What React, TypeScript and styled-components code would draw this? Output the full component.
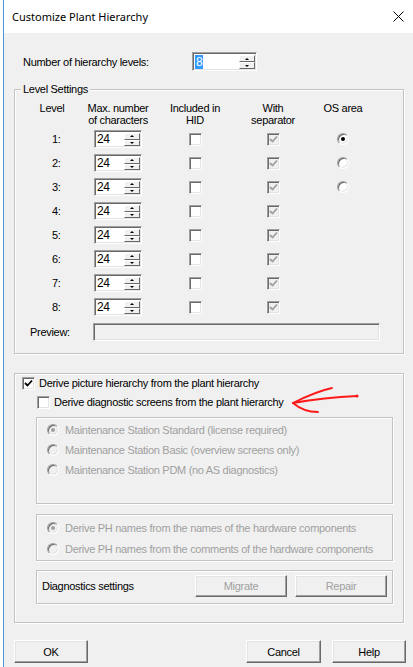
import { FC, ReactNode } from 'react';
import styled, { createGlobalStyle } from 'styled-components';

const GlobalStyle = createGlobalStyle`
  html, body {
    margin: 0;
    padding: 0;
    background: #fff;
  }
  body {
    font-family: 'Liberation Sans', Arial, sans-serif;
    font-size: 11px;
  }
`;

const Page = styled.div`
  width: 413px;
  height: 667px;
  display: flex;
  background: #fff;
  overflow: hidden;
`;

const Window = styled.div`
  flex: 1;
  margin-left: 3px;
  display: flex;
  flex-direction: column;
  border-left: 1px solid #4a94de;
  background: #f0f0f0;
`;

const TitleBar = styled.div`
  height: 33px;
  flex-shrink: 0;
  display: flex;
  align-items: center;
  justify-content: space-between;
  padding: 0 9px 0 8px;
  background: #fff;
  font-family: 'Noto Sans', 'Open Sans', sans-serif;
  font-size: 11px;
  color: #000;
`;

const Body = styled.div`
  display: flex;
  flex-direction: column;
  padding: 0 9px 0 10px;
  font-family: 'Liberation Sans', Arial, sans-serif;
  font-size: 11px;
  letter-spacing: -0.3px;
  color: #000;
`;

const LevelsRow = styled.div`
  margin-top: 19px;
  height: 19px;
  display: flex;
  align-items: center;
`;

const LevelsLabel = styled.span`
  margin-left: 9px;
  width: 169px;
`;

const Group = styled.div<{ $top: number; $pad: string }>`
  position: relative;
  margin-top: ${({ $top }) => $top}px;
  padding: ${({ $pad }) => $pad};
  border: 1px solid #c3c3c3;
  box-shadow: inset 1px 1px 0 #fff, 1px 1px 0 #fff;
`;

const Legend = styled.span`
  position: absolute;
  top: -7px;
  left: 6px;
  padding: 0 2px;
  line-height: 13px;
  background: #f0f0f0;
`;

const LevelGrid = styled.div`
  display: grid;
  grid-template-columns: 74px 58px 96px 60px 80px;
  grid-template-rows: 25px;
  grid-auto-rows: 24px;
`;

const Head = styled.div`
  display: flex;
  flex-direction: column;
  align-items: center;
  line-height: 12px;
  white-space: nowrap;
`;

const Cell = styled.div<{ $start?: boolean }>`
  display: flex;
  align-items: center;
  justify-content: ${({ $start }) => ($start ? 'flex-start' : 'center')};
  padding-left: ${({ $start }) => ($start ? '37px' : '0')};
`;

const PreviewRow = styled.div`
  margin-top: 3px;
  height: 19px;
  display: flex;
  align-items: center;
  padding-left: 15px;
`;

const PreviewLabel = styled.span`
  width: 63px;
`;

const Sunken = styled.div<{ $w: number; $h: number; $bg?: string }>`
  width: ${({ $w }) => $w}px;
  height: ${({ $h }) => $h}px;
  box-sizing: border-box;
  border: 1px solid;
  border-color: #a0a0a0 #fff #fff #a0a0a0;
  box-shadow: inset 1px 1px 0 #696969, inset -1px -1px 0 #e3e3e3;
  background: ${({ $bg }) => $bg ?? '#fff'};
  display: flex;
  align-items: stretch;
`;

const SpinText = styled.span`
  flex: 1;
  display: flex;
  align-items: center;
  padding-left: 2px;
  font-size: 12px;
`;

const Selected = styled.span`
  background: #3399ff;
  color: #fff;
  line-height: 14px;
  padding: 0 1px;
`;

const SpinButtons = styled.div`
  width: 16px;
  display: flex;
  flex-direction: column;
  padding: 2px 1px 1px 0;
`;

const SpinBtn = styled.div<{ $down?: boolean }>`
  flex: 1;
  display: flex;
  align-items: center;
  justify-content: center;
  background: #f0f0f0;
  border: 1px solid;
  border-color: #fff #696969 #696969 #fff;
  &::after {
    content: '';
    border-left: 2px solid transparent;
    border-right: 2px solid transparent;
    ${({ $down }) => ($down ? 'border-top: 2px solid #000;' : 'border-bottom: 2px solid #000;')}
  }
`;

const CheckBox = styled.span<{ $disabled?: boolean }>`
  width: 13px;
  height: 13px;
  flex-shrink: 0;
  box-sizing: border-box;
  border: 1px solid;
  border-color: #a0a0a0 #fff #fff #a0a0a0;
  box-shadow: inset 1px 1px 0 #696969, inset -1px -1px 0 #e3e3e3;
  background: ${({ $disabled }) => ($disabled ? '#f0f0f0' : '#fff')};
  display: flex;
  align-items: center;
  justify-content: center;
`;

const RadioDot = styled.span<{ $checked?: boolean; $disabled?: boolean }>`
  width: 12px;
  height: 12px;
  flex-shrink: 0;
  box-sizing: border-box;
  border-radius: 50%;
  border: 1px solid;
  border-color: #a0a0a0 #fff #fff #a0a0a0;
  box-shadow: inset 1px 1px 0 #696969, inset -1px -1px 0 #e3e3e3;
  background: ${({ $disabled }) => ($disabled ? '#f0f0f0' : '#fff')};
  display: flex;
  align-items: center;
  justify-content: center;
  &::after {
    content: '';
    display: ${({ $checked }) => ($checked ? 'block' : 'none')};
    width: 4px;
    height: 4px;
    border-radius: 50%;
    background: ${({ $disabled }) => ($disabled ? '#a0a0a0' : '#000')};
  }
`;

const CheckRow = styled.div<{ $indent: number; $top?: number }>`
  height: 18px;
  margin-top: ${({ $top }) => $top ?? 0}px;
  display: flex;
  align-items: center;
  gap: 4px;
  padding-left: ${({ $indent }) => $indent}px;
`;

const Inner = styled.div<{ $top: number; $pad: string }>`
  margin: ${({ $top }) => $top}px 0 0 14px;
  padding: ${({ $pad }) => $pad};
  border: 1px solid #c3c3c3;
  box-shadow: inset 1px 1px 0 #fff, 1px 1px 0 #fff;
`;

const RadioRow = styled.div<{ $h: number }>`
  height: ${({ $h }) => $h}px;
  display: flex;
  align-items: center;
  gap: 6px;
  color: #a0a0a0;
`;

const DiagRow = styled.div`
  display: flex;
  align-items: center;
  gap: 8px;
`;

const DiagLabel = styled.span`
  flex: 1;
`;

const Button = styled.button<{ $w: number; $h: number }>`
  width: ${({ $w }) => $w}px;
  height: ${({ $h }) => $h}px;
  box-sizing: border-box;
  padding: 0;
  font: inherit;
  letter-spacing: inherit;
  color: ${({ disabled }) => (disabled ? '#a0a0a0' : '#000')};
  background: #f0f0f0;
  border: 1px solid;
  border-color: #fff #696969 #696969 #fff;
  box-shadow: inset -1px -1px 0 #a0a0a0, inset 1px 1px 0 #e3e3e3;
`;

const ButtonRow = styled.div`
  margin: 17px -2px 0 0;
  display: flex;
  gap: 11px;
  & > :nth-child(2) {
    margin-left: auto;
  }
`;

const Arrow = styled.svg`
  position: absolute;
  left: 275px;
  top: 11px;
  overflow: visible;
`;

const Check: FC<{ color: string }> = ({ color }) => (
  <svg width="9" height="9" viewBox="0 0 9 9">
    <path d="M1 4 L3.5 6.5 L8 1.5" fill="none" stroke={color} strokeWidth="1.8" />
  </svg>
);

const Spin: FC<{ w: number; h: number; children: ReactNode }> = ({ w, h, children }) => (
  <Sunken $w={w} $h={h}>
    <SpinText>{children}</SpinText>
    <SpinButtons>
      <SpinBtn />
      <SpinBtn $down />
    </SpinButtons>
  </Sunken>
);

const levels = [1, 2, 3, 4, 5, 6, 7, 8];

const App: FC = () => (
  <Page>
    <GlobalStyle />
    <Window>
      <TitleBar>
        <span>Customize Plant Hierarchy</span>
        <svg width="11" height="11" viewBox="0 0 11 11">
          <path d="M0.5 0.5 L10.5 10.5 M10.5 0.5 L0.5 10.5" stroke="#000" strokeWidth="1" />
        </svg>
      </TitleBar>
      <Body>
        <LevelsRow>
          <LevelsLabel>Number of hierarchy levels:</LevelsLabel>
          <Spin w={65} h={19}>
            <Selected>8</Selected>
          </Spin>
        </LevelsRow>

        <Group $top={18} $pad="12px 0 12px 0">
          <Legend>Level Settings</Legend>
          <LevelGrid>
            <Head>
              <span>Level</span>
            </Head>
            <Head>
              <span>Max. number</span>
              <span>of characters</span>
            </Head>
            <Head>
              <span>Included in</span>
              <span>HID</span>
            </Head>
            <Head>
              <span>With</span>
              <span>separator</span>
            </Head>
            <Head>
              <span>OS area</span>
            </Head>
            {levels.map((n) => [
              <Cell key={`l${n}`} $start>
                {n}:
              </Cell>,
              <Cell key={`s${n}`}>
                <Spin w={48} h={18}>24</Spin>
              </Cell>,
              <Cell key={`h${n}`}>
                <CheckBox />
              </Cell>,
              <Cell key={`w${n}`}>
                <CheckBox $disabled>
                  <Check color="#a0a0a0" />
                </CheckBox>
              </Cell>,
              <Cell key={`o${n}`}>{n <= 3 && <RadioDot $checked={n === 1} />}</Cell>,
            ])}
          </LevelGrid>
          <PreviewRow>
            <PreviewLabel>Preview:</PreviewLabel>
            <Sunken $w={287} $h={18} $bg="#f0f0f0" />
          </PreviewRow>
        </Group>

        <Group $top={19} $pad="0 10px 18px 7px">
          <CheckRow $indent={0}>
            <CheckBox>
              <Check color="#000" />
            </CheckBox>
            <span>Derive picture hierarchy from the plant hierarchy</span>
          </CheckRow>
          <CheckRow $indent={15} $top={1}>
            <CheckBox />
            <span>Derive diagnostic screens from the plant hierarchy</span>
          </CheckRow>
          <Arrow width="72" height="30" viewBox="0 0 72 30">
            <g fill="none" stroke="#ff1a1a" strokeWidth="1.8" strokeLinecap="round">
              <path d="M3 18 C 20 15, 45 12, 67 11" />
              <path d="M3 18 C 15 12, 28 6, 42 3" />
              <path d="M3 18 C 10 24, 18 27, 28 27" />
            </g>
            <circle cx="67" cy="11" r="1.6" fill="#ff1a1a" />
          </Arrow>

          <Inner $top={6} $pad="2px 0 23px 10px">
            <RadioRow $h={20}>
              <RadioDot $checked $disabled />
              Maintenance Station Standard (license required)
            </RadioRow>
            <RadioRow $h={20}>
              <RadioDot $disabled />
              Maintenance Station Basic (overview screens only)
            </RadioRow>
            <RadioRow $h={20}>
              <RadioDot $disabled />
              Maintenance Station PDM (no AS diagnostics)
            </RadioRow>
          </Inner>

          <Inner $top={10} $pad="2px 0 1px 10px">
            <RadioRow $h={21}>
              <RadioDot $checked $disabled />
              Derive PH names from the names of the hardware components
            </RadioRow>
            <RadioRow $h={21}>
              <RadioDot $disabled />
              Derive PH names from the comments of the hardware components
            </RadioRow>
          </Inner>

          <Inner $top={9} $pad="4px 5px 6px 5px">
            <DiagRow>
              <DiagLabel>Diagnostics settings</DiagLabel>
              <Button $w={92} $h={22} disabled>
                Migrate
              </Button>
              <Button $w={92} $h={22} disabled>
                Repair
              </Button>
            </DiagRow>
          </Inner>
        </Group>

        <ButtonRow>
          <Button $w={74} $h={23}>OK</Button>
          <Button $w={75} $h={23}>Cancel</Button>
          <Button $w={74} $h={23}>Help</Button>
        </ButtonRow>
      </Body>
    </Window>
  </Page>
);

export default App;
